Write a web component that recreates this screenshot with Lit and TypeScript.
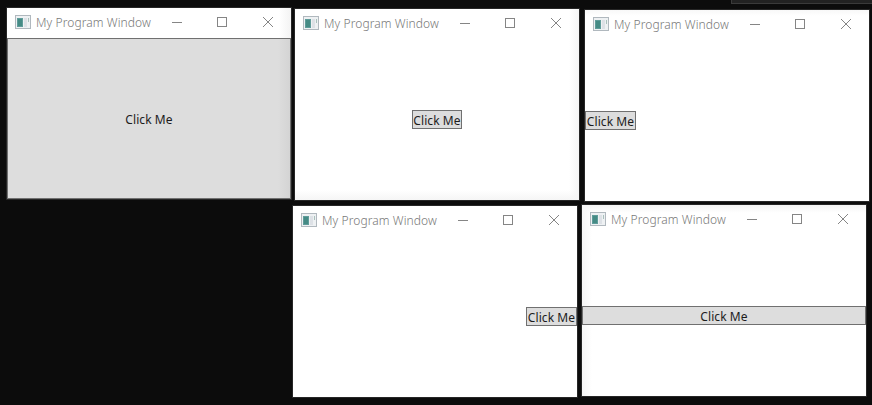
import { LitElement, html, css } from "lit";
import { customElement, property } from "lit/decorators.js";
import { styleMap } from "lit/directives/style-map.js";

@customElement("program-window")
class ProgramWindow extends LitElement {
  @property({ reflect: true }) placement = "center";
  @property({ reflect: true }) shade = "none";

  static styles = css`
    :host {
      display: flex;
      flex-direction: column;
      width: 284px;
      height: 191px;
      background: #fff;
      box-shadow: 0 0 0 1px #262626;
      font-family: "Noto Sans", "Open Sans", sans-serif;
    }
    :host([shade="right"]) {
      background: linear-gradient(to left, #f3f3f3, #fff 12px);
    }
    :host([shade="corner"]) {
      background: linear-gradient(to left, #f5f5f5, rgba(255, 255, 255, 0) 10px),
        linear-gradient(to top, #f5f5f5, #fff 10px);
    }
    :host([shade="top"]) {
      background: linear-gradient(to bottom, #f8f8f8, #fff 6px);
    }
    :host([shade="left"]) {
      background: linear-gradient(to right, #f6f6f6, rgba(255, 255, 255, 0) 10px),
        linear-gradient(to bottom, #f3f3f3, #fff 8px);
    }
    .bar {
      display: flex;
      align-items: center;
      height: 30px;
      flex: none;
      box-sizing: border-box;
      padding: 0 0 2px 8px;
    }
    svg {
      display: block;
      flex: none;
    }
    .title {
      width: 128px;
      margin-left: 5px;
      padding-top: 2px;
      font-size: 12px;
      font-weight: 300;
      line-height: 18px;
      letter-spacing: 0.09px;
      color: #787878;
      white-space: nowrap;
    }
    .client {
      flex: 1;
      display: flex;
      align-items: center;
      justify-content: center;
    }
    .btn {
      box-sizing: border-box;
      width: 51px;
      height: 19px;
      padding: 2px 0 0;
      border: 1px solid #707070;
      border-radius: 0;
      background: #ddd;
      display: flex;
      align-items: center;
      justify-content: center;
      font: 12px/15px "Noto Sans", "Open Sans", sans-serif;
      letter-spacing: 0.08px;
      color: #1c1c1c;
      white-space: nowrap;
    }
    :host([placement="center"]) .btn {
      width: 50px;
    }
    :host([placement="left"]) .client {
      justify-content: flex-start;
    }
    :host([placement="right"]) .client {
      justify-content: flex-end;
    }
    :host([placement="wide"]) .btn,
    :host([placement="fill"]) .btn {
      width: 100%;
    }
    :host([placement="fill"]) .btn {
      height: 100%;
      background: linear-gradient(to left, #d4d4d4, #ddd 12px);
    }
  `;

  render() {
    return html`
      <div class="bar">
        <svg width="16" height="14" viewBox="0 0 16 14">
          <rect x=".5" y=".5" width="15" height="13" fill="#eef1f3" stroke="#b0b8be" />
          <rect x="2" y="3" width="6" height="9" fill="#5f9c9a" />
          <rect x="3" y="4" width="4" height="7" fill="#458b85" />
          <rect x="9" y="3" width="3" height="9" fill="#dde1e6" />
          <rect x="13" y="3" width="1" height="4" fill="#a9c0bc" />
        </svg>
        <span class="title">My Program Window</span>
        <svg width="127" height="12" viewBox="157 0 127 12" fill="none" stroke="#858585">
          <path d="M165 6.5h10" />
          <rect x="210.5" y="1.5" width="9" height="9" />
          <path d="M256 1l10 10M266 1l-10 10" />
        </svg>
      </div>
      <div class="client"><button class="btn">Click Me</button></div>
    `;
  }
}

const windows = [
  { x: 7, y: 8, placement: "fill", shade: "right" },
  { x: 295, y: 9, placement: "center", shade: "corner" },
  { x: 585, y: 10, placement: "left", shade: "top" },
  { x: 293, y: 206, placement: "right", shade: "none" },
  { x: 582, y: 205, placement: "wide", shade: "left" },
];

@customElement("app-root")
class AppRoot extends LitElement {
  static styles = css`
    :host {
      display: block;
      position: relative;
      width: 872px;
      height: 405px;
      overflow: hidden;
      background: #0c0c0c;
    }
    .panel {
      position: absolute;
      top: 0;
      right: 0;
      box-sizing: border-box;
      width: 141px;
      height: 4px;
      background: #222;
      border-left: 1px solid #3a3a3a;
      border-bottom: 1px solid #3a3a3a;
    }
    program-window {
      position: absolute;
    }
  `;

  render() {
    return html`
      <div class="panel"></div>
      ${windows.map(
        (w) => html`<program-window
          placement=${w.placement}
          shade=${w.shade}
          style=${styleMap({ left: `${w.x}px`, top: `${w.y}px` })}
        ></program-window>`
      )}
    `;
  }
}
